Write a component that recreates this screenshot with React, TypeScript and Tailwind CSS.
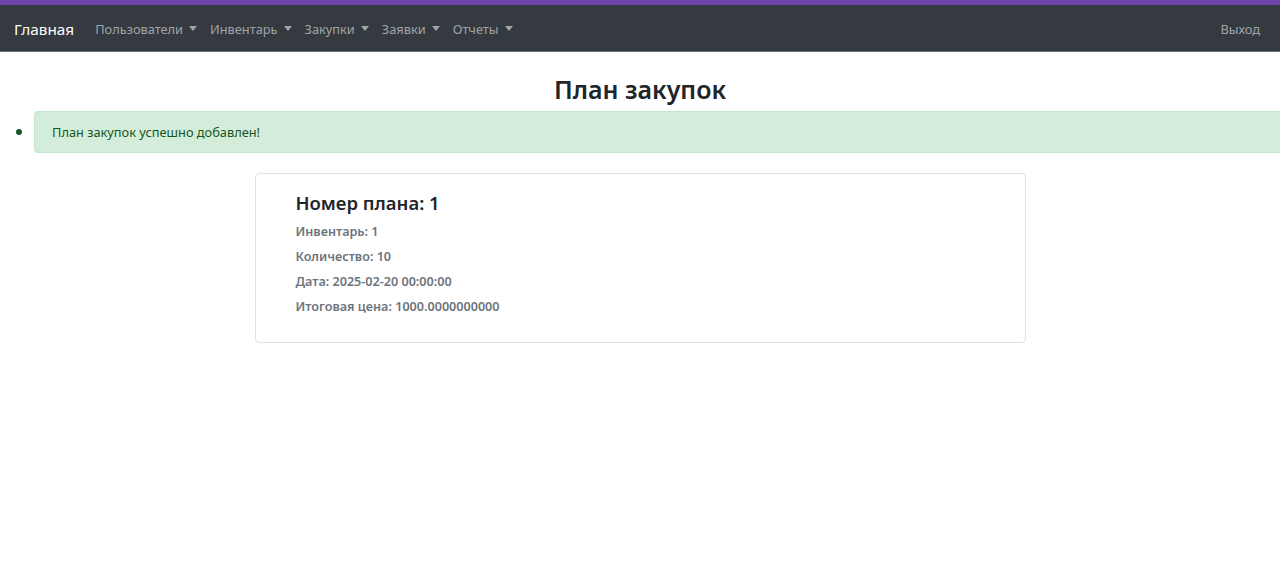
import React from "react";

const Caret = () => (
  <span className="ml-[6px] inline-block w-0 h-0 border-l-[4px] border-r-[4px] border-t-[5px] border-l-transparent border-r-transparent border-t-current align-middle relative top-[-1px]" />
);

const items = ["Пользователи", "Инвентарь", "Закупки", "Заявки", "Отчеты"];

export default function App() {
  return (
    <div className="min-h-[580px] bg-white overflow-hidden" style={{ fontFamily: '"Noto Sans", "Open Sans", sans-serif' }}>
      <div className="h-[5px] bg-[#6f42a8]" />
      <nav className="h-[47px] bg-[#343a40] border-b border-[#6c7074] flex items-center pl-[14px] pr-[20px] pt-[3px]">
        <span className="text-white text-[15.3px] mr-[21px]">Главная</span>
        <div className="flex items-center gap-[13px] text-[12.8px] text-[#a1a4a7]">
          {items.map((t) => (
            <span key={t} className="flex items-center">
              {t}
              <Caret />
            </span>
          ))}
        </div>
        <span className="ml-auto text-[12.8px] text-[#a1a4a7]">Выход</span>
      </nav>
      <h2 className="text-center text-[25px] font-semibold text-[#212529] mt-[19px] leading-[36px]">План закупок</h2>
      <ul className="list-disc pl-[34px] mt-[4px] text-[#155724]">
        <li className="marker:text-[#155724]">
          <div className="bg-[#d4edda] border border-[#c3e6cb] rounded-l-[4px] h-[42px] flex items-center pl-[17px] text-[12.8px] w-[calc(100%+4px)] pt-[2px]">
            План закупок успешно добавлен!
          </div>
        </li>
      </ul>
      <div className="flex justify-center mt-[20px]">
        <div className="w-[771px] h-[170px] border border-[#dfe1e3] rounded-[4px] pl-[40px] pt-[15px]">
          <div className="text-[18.5px] font-semibold text-[#212529] leading-[28px]">Номер плана: 1</div>
          <div className="text-[12.6px] font-semibold text-[#6c757d] leading-[25px] mt-[2px]">
            <div>Инвентарь: 1</div>
            <div>Количество: 10</div>
            <div>Дата: 2025-02-20 00:00:00</div>
            <div>Итоговая цена: 1000.0000000000</div>
          </div>
        </div>
      </div>
    </div>
  );
}
